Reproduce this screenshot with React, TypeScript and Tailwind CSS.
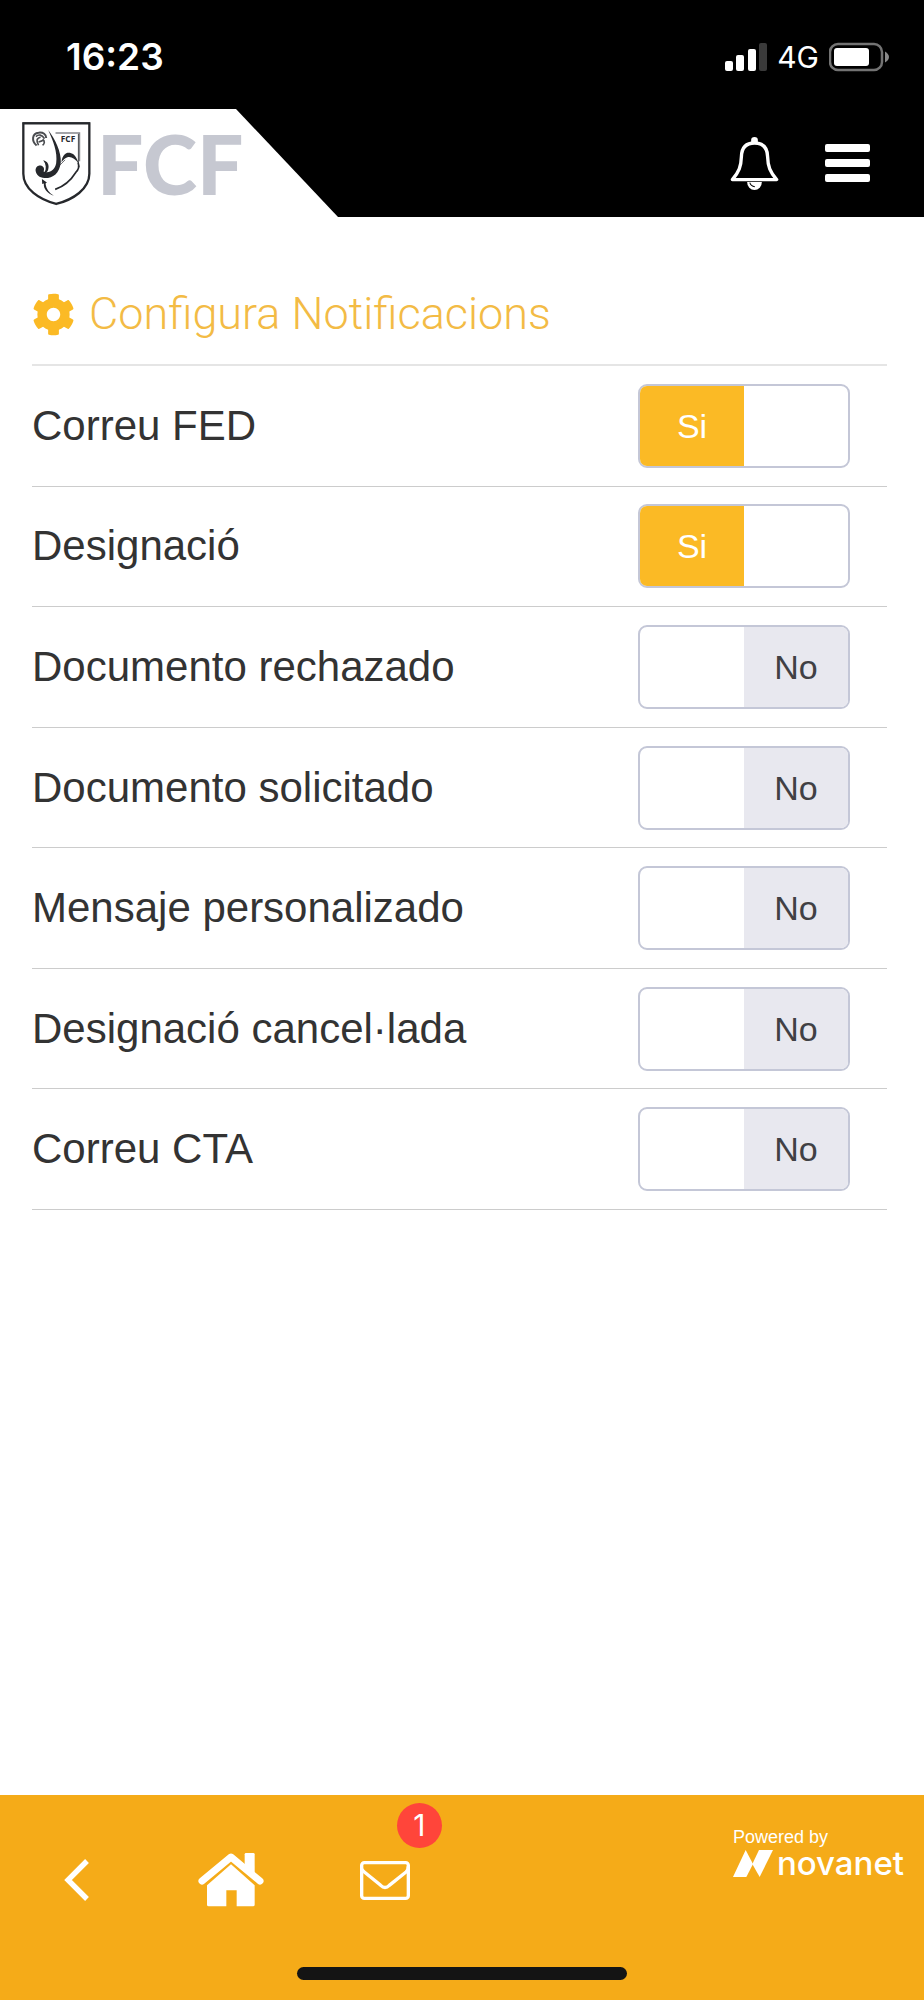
import { useState } from "react";
import { FaCog } from "react-icons/fa";

interface Setting {
  id: string;
  label: string;
  enabled: boolean;
}

const INITIAL_SETTINGS: Setting[] = [
  { id: "correu-fed",   label: "Correu FED",            enabled: true },
  { id: "designacio",   label: "Designació",            enabled: true },
  { id: "rechazado",    label: "Documento rechazado",   enabled: false },
  { id: "solicitado",   label: "Documento solicitado",  enabled: false },
  { id: "mensaje",      label: "Mensaje personalizado", enabled: false },
  { id: "cancellada",   label: "Designació cancel·lada", enabled: false },
  { id: "correu-cta",   label: "Correu CTA",            enabled: false },
];

function StatusBar() {
  return (
    <div className="flex h-[109px] items-center justify-between bg-black pt-1 pr-[35px] pl-[66px] font-['Inter',sans-serif] text-white">
      <span className="text-[37px] leading-[44px] font-semibold">16:23</span>
      <div className="flex items-center gap-[10px]">
        <svg className="h-7 w-[42px]" viewBox="0 0 42 28" fill="currentColor">
          <rect x="0" y="18" width="8" height="10" rx="2" />
          <rect x="11" y="12" width="8" height="16" rx="2" />
          <rect x="23" y="6" width="8" height="22" rx="2" />
          <rect x="34" y="0" width="8" height="28" rx="2" fill="#3a3a3a" />
        </svg>
        <span className="text-[30px] leading-9">4G</span>
        <svg className="h-[30px] w-[60px]" viewBox="0 0 60 30">
          <rect x="1" y="2" width="52" height="26" rx="8" fill="none" stroke="#737373" strokeWidth="2.5" />
          <rect x="5" y="6" width="35" height="18" rx="3" fill="#fff" />
          <path d="M56 9.500q4 2.500 4 5.500t-4 5.500z" fill="#8a8a8a" />
        </svg>
      </div>
    </div>
  );
}

function Crest() {
  return (
    <svg className="h-[85px] w-[69px] shrink-0" viewBox="0 0 208 254" fill="none" stroke="#26282c">
      <path strokeWidth="7" d="M4 6H203V158C203 204 154 236 103 249C52 236 4 204 4 158Z" />
      <path strokeWidth="4" d="M2 5H205" />
      {/* ball */}
      <path stroke="#4a4c50" strokeWidth="6" d="M44 73C28 60 30 36 50 34C64 32 73 40 73 50" />
      <path stroke="#4a4c50" strokeWidth="5" d="M42 46C50 38 60 40 68 52M50 72C42 60 44 50 56 48M62 72C68 68 70 60 62 54M50 62L62 58" />
      {/* frame line */}
      <path stroke="#85878c" strokeWidth="5" d="M101 35H173V120" />
      <path stroke="#4a4c50" strokeWidth="3" d="M170 38V130L173 138" />
      <text x="117" y="63" fill="#26282c" stroke="none" className="font-['Open_Sans',sans-serif] text-[25px] font-bold">FCF</text>
      {/* players */}
      <path fill="#26282c" stroke="none" d="M79 26C99 52 119 92 117 124C113 158 92 172 68 171C52 170 43 161 41 149C40 139 47 132 56 133C65 135 69 142 65 151C83 158 99 146 103 126C108 92 93 57 79 26Z" />
      <path fill="#26282c" stroke="none" d="M64 117C77 120 83 130 79 145C77 153 70 157 68 154C74 142 73 129 64 117Z" />
      <path fill="#26282c" stroke="none" d="M119 123C122 98 135 92 148 96C160 99 166 113 171 127C160 112 148 105 137 108C130 110 125 115 119 123Z" />
      <path strokeWidth="5" d="M169 124C174 137 170 146 162 154C146 180 128 195 100 205" />
      <path strokeWidth="2" d="M130 116L106 140" />
      <path fill="#26282c" stroke="none" d="M60 174L75 184L71 187C73 204 82 215 96 224C75 216 64 202 66 187L61 189Z" />
    </svg>
  );
}

function Header() {
  return (
    <header className="flex h-[108px] justify-between bg-black">
      <a
        href="#inici"
        aria-label="FCF"
        className="flex w-[338px] items-center gap-[6px] bg-white pl-[22px] [clip-path:polygon(0_0,236px_0,100%_100%,0_100%)]"
      >
        <Crest />
        <span className="font-['Lato',sans-serif] text-[82px] leading-[100px] font-black text-[#c6c8d1]">FCF</span>
      </a>
      <div className="flex items-center gap-[46px] pr-[54px] text-white">
        <button type="button" aria-label="Notificacions">
          <svg className="h-[53px] w-[49px]" viewBox="0 0 146 158" fill="none" stroke="currentColor">
            <path fill="currentColor" stroke="none" d="M63 18V9A10 9 0 0 1 83 9V18Z" />
            <path strokeWidth="10" strokeLinejoin="round" d="M7 127C27 104 33 88 34 58C35 30 49 18 73 18C97 18 111 30 112 58C113 88 119 104 139 127Z" />
            <path fill="currentColor" stroke="none" d="M51 134H95A22 24 0 0 1 51 134Z" />
            <path stroke="#000" strokeWidth="3" d="M59 136C61 143 66 147 74 148" />
          </svg>
        </button>
        <button type="button" aria-label="Menú" className="flex w-[45px] flex-col gap-[7px]">
          <span className="h-2 w-full rounded-xs bg-white" />
          <span className="h-2 w-full rounded-xs bg-white" />
          <span className="h-2 w-full rounded-xs bg-white" />
        </button>
      </div>
    </header>
  );
}

function SettingRow({ setting, onToggle }: { setting: Setting; onToggle: (id: string) => void }) {
  return (
    <label className="relative flex flex-1 cursor-pointer items-center justify-between border-b border-[#cccccc] pr-[37px]">
      <span className="text-[42px] leading-[48px]">{setting.label}</span>
      <input
        type="checkbox"
        className="peer sr-only"
        checked={setting.enabled}
        onChange={() => onToggle(setting.id)}
      />
      <span
        aria-hidden="true"
        className="grid h-[84px] w-[212px] shrink-0 grid-cols-2 overflow-hidden rounded-[9px] border-2 border-[#c4c7d7] bg-white text-center text-[34px] leading-[80px] peer-focus-visible:ring-2"
      >
        {setting.enabled ? (
          <span className="bg-[#fbba25] text-white">Si</span>
        ) : (
          <span className="col-start-2 bg-[#e8e8ef] text-[#404044]">No</span>
        )}
      </span>
    </label>
  );
}

function Footer() {
  return (
    <footer className="bg-[#f5ab18] text-white">
      <div className="flex h-[170px] justify-between">
        <nav className="flex w-1/2 items-center">
          <button type="button" aria-label="Enrere" className="flex w-1/3 justify-center">
            <svg className="h-[42px] w-[25px]" viewBox="0 0 75 126" fill="none" stroke="currentColor" strokeWidth="16">
              <path d="M69 6L12 63L69 120" />
            </svg>
          </button>
          <a href="#inici" aria-label="Inici" className="flex w-1/3 justify-center">
            <svg className="h-[54px] w-[66px]" viewBox="0 0 198 162" fill="currentColor">
              <path fill="none" stroke="currentColor" strokeWidth="21" strokeLinecap="round" strokeLinejoin="round" d="M12 84L99 12L186 84" />
              <path d="M144 0H166Q170 0 170 4V64L140 38V4Q140 0 144 0Z" />
              <path d="M99 34L170 97V155Q170 160 165 160H116V112H85V160H32Q27 160 27 155V97Z" />
            </svg>
          </a>
          <a href="#missatges" aria-label="Missatges, 1 nou" className="flex w-1/3 justify-center">
            <span className="relative">
              <svg className="h-[39px] w-[50px]" viewBox="0 0 150 117" fill="none" stroke="currentColor" strokeWidth="10">
                <rect x="5" y="5" width="140" height="107" rx="8" />
                <path d="M5 24Q8 29 13 33L62 73Q75 86 88 73L138 33Q145 27 145 16" />
              </svg>
              <span className="absolute -top-[58px] left-[37px] flex size-[45px] items-center justify-center rounded-full bg-[#ff453a] font-['Inter',sans-serif] text-[30px] leading-none">
                1
              </span>
            </span>
          </a>
        </nav>
        <a href="#novanet" className="flex flex-col pt-8 pr-5">
          <span className="text-[18px] leading-5">Powered by</span>
          <span className="flex items-center gap-1">
            <svg className="h-[27px] w-10" viewBox="0 0 120 81" fill="currentColor">
              <path d="M38 0L60 42L40 81H0Z" />
              <path d="M78 0H120L80 81L58 42Z" />
            </svg>
            <span className="font-['Inter',sans-serif] text-[33px] leading-8 font-medium">novanet</span>
          </span>
        </a>
      </div>
      <div className="flex h-[35px] items-end justify-center pb-5">
        <div className="h-[13px] w-[330px] rounded-full bg-[#141414]" />
      </div>
    </footer>
  );
}

export default function App() {
  const [settings, setSettings] = useState(INITIAL_SETTINGS);

  const toggle = (id: string) => {
    setSettings((prev) => prev.map((s) => (s.id === id ? { ...s, enabled: !s.enabled } : s)));
  };

  return (
    <div className="flex min-h-screen flex-col bg-white font-['Liberation_Sans',Arial,sans-serif] text-[#333]">
      <StatusBar />
      <Header />
      <main className="flex-1 pr-[37px] pl-8">
        <h1 className="flex items-center gap-[14px] border-b-2 border-[#e5e5e5] pt-[71px] pb-6 font-['Roboto',sans-serif] text-[45px] leading-[52px] font-light text-[#f3bb45]">
          <FaCog className="size-[43px] text-[#fbba25]" />
          Configura Notificacions
        </h1>
        <div className="flex min-h-[844px] flex-col">
          {settings.map((s) => (
            <SettingRow key={s.id} setting={s} onToggle={toggle} />
          ))}
        </div>
      </main>
      <Footer />
    </div>
  );
}
